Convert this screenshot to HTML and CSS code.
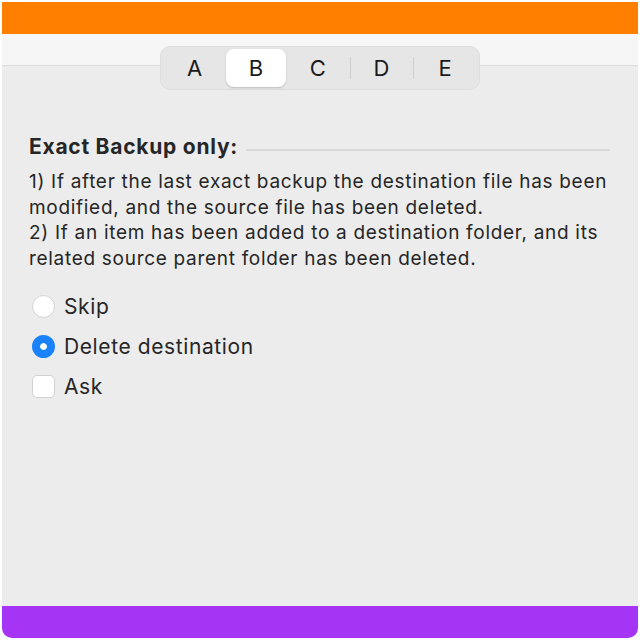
FILE: index.html
```html
<!DOCTYPE html>
<html lang="en">
<head>
    <meta charset="UTF-8">
    <title>Exact Backup</title>
    <link rel="stylesheet" href="styles.css">
</head>
<body>

    <div class="window">
        <div class="titlebar"></div>

        <!-- Barra con i tab -->
        <div class="toolbar">
            <div class="segmented">
                <div class="seg first">A</div>
                <div class="seg selected">B</div>
                <div class="seg">C</div>
                <div class="seg divided">D</div>
                <div class="seg divided">E</div>
            </div>
        </div>

        <div class="content">
            <div class="section-title">
                <h1>Exact Backup only:</h1>
                <div class="rule"></div>
            </div>
            <p class="desc">
                1) If after the last exact backup the destination file has been modified, and the source file has been deleted.<br>
                2) If an item has been added to a destination folder, and its related source parent folder has been deleted.
            </p>

            <div class="options">
                <label class="option"><span class="radio"></span>Skip</label>
                <label class="option"><span class="radio checked"></span>Delete destination</label>
                <label class="option"><span class="checkbox"></span>Ask</label>
            </div>
        </div>

        <div class="footer"></div>
    </div>

</body>
</html>
```

FILE: styles.css
```css
* {
    margin: 0;
    padding: 0;
    box-sizing: border-box;
}

body {
    background-color: white;
    font-family: Inter, "Noto Sans", sans-serif;
    color: #262626;
}

.window {
    margin: 2px;
    width: 636px;
    height: 636px;
    display: flex;
    flex-direction: column;
    background: #ececec;
    border-radius: 0 0 10px 10px;
    overflow: hidden;
}

.titlebar {
    height: 32px;
    background: #ff7f00;
}

/* Sfondo chiaro in alto, linea di separazione, poi grigio */
.toolbar {
    display: flex;
    justify-content: center;
    padding-top: 12px;
    background: linear-gradient(#f6f6f6 0 31px, #dedede 31px 32px, #ececec 32px);
}

.segmented {
    display: flex;
    width: 320px;
    height: 44px;
    padding: 2px;
    background: #e6e6e6;
    border: 1px solid #dddddd;
    border-radius: 10px;
}

.seg {
    flex: 1;
    display: flex;
    align-items: center;
    justify-content: center;
    font-size: 22px;
    color: #1a1a1a;
    position: relative;
}

.seg.first {
    flex: 0 0 63px;
}

.seg.selected {
    flex: 0 0 60px;
    background: white;
    border-radius: 8px;
    box-shadow: 0 1px 2px rgba(0, 0, 0, 0.18);
}

.seg.divided::before {
    content: "";
    position: absolute;
    left: 0;
    top: 8px;
    bottom: 8px;
    width: 1px;
    background: #cfcfcf;
}

.content {
    flex: 1;
    padding: 44px 28px 0 27px;
}

.section-title {
    display: flex;
    align-items: center;
    gap: 8px;
}

h1 {
    font-size: 21px;
    line-height: 26px;
    font-weight: 700;
    letter-spacing: 0.75px;
    white-space: nowrap;
}

.rule {
    flex: 1;
    height: 2px;
    margin-top: 5px;
    background: #d8d8d8;
}

.desc {
    margin-top: 9px;
    font-size: 19px;
    line-height: 25.5px;
    letter-spacing: 0.7px;
}

.options {
    margin-top: 15px;
    display: flex;
    flex-direction: column;
}

.option {
    display: flex;
    align-items: center;
    gap: 9px;
    height: 40px;
    font-size: 21px;
    letter-spacing: 0.6px;
    padding-left: 3px;
}

.radio {
    width: 23px;
    height: 23px;
    border-radius: 50%;
    background: white;
    border: 1px solid #d2d2d2;
}

.radio.checked {
    background: #1a82fb;
    border: 8px solid #1a82fb;
    box-shadow: inset 0 0 0 10px white;
}

.checkbox {
    width: 23px;
    height: 23px;
    border-radius: 5px;
    background: white;
    border: 1px solid #d2d2d2;
}

.footer {
    height: 32px;
    background: #a634f5;
}
```
